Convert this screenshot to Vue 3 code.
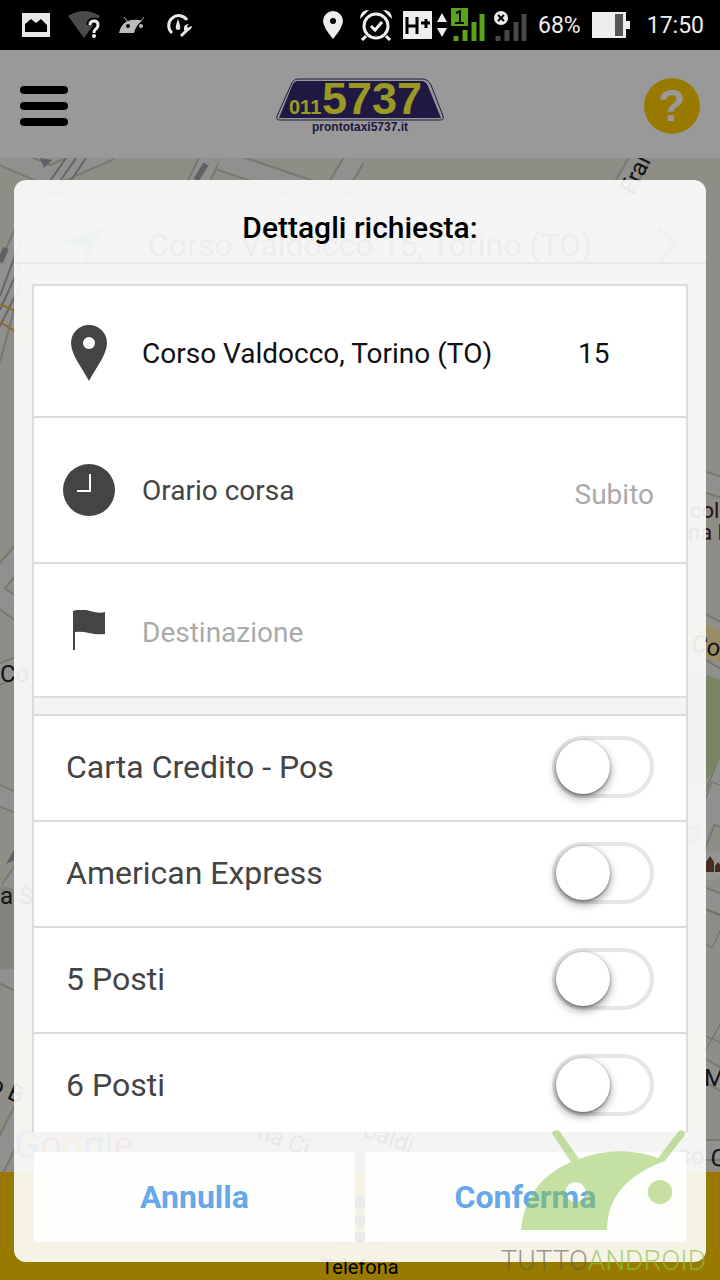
<template>
  <div class="screen">
    <!-- Status bar -->
    <div class="status-bar">
      <div class="status-group status-left">
        <svg class="status-icon" viewBox="0 0 28 28">
          <rect x="0" y="2" width="28" height="24" fill="#e8e8e8" />
          <path d="M3 21V13L9 8l5 4 5-4 6 6v7z" fill="#000" />
        </svg>
        <svg class="status-icon wide" viewBox="0 0 32 28">
          <path d="M0 5q16-10 32 0L16 27z" fill="#4a4a4a" />
          <path d="M22 14q0-4 4-4t4 4q0 2-2 4-2 1-2 4v5" fill="none" stroke="#000" stroke-width="7" />
          <path d="M22 14q0-4 4-4t4 4q0 2-2 4-2 1-2 4" fill="none" stroke="#eee" stroke-width="3" />
          <circle cx="26" cy="25" r="2" fill="#eee" />
        </svg>
        <svg class="status-icon" viewBox="0 0 28 28">
          <path d="M1 22Q3 11 13 9q8-1 11 1-6 4-8 12z" fill="#bbb" />
          <path d="M10 11L6 6M22 11l4-5" stroke="#bbb" stroke-width="1" />
          <circle cx="10" cy="15" r="2" fill="#000" />
          <circle cx="23" cy="15" r="2" fill="#bbb" />
        </svg>
        <svg class="status-icon" viewBox="0 0 28 28">
          <path d="M8 22A10 10 0 1 1 23 9" fill="none" stroke="#e8e8e8" stroke-width="3" />
          <path d="M14 8q3 8 2 10-2 2-4 0-1-2 2-10z" fill="#e8e8e8" />
          <path d="M17 25l6-6" stroke="#e8e8e8" stroke-width="3" />
          <path d="M25 13q-6 0-5 6 5 3 8-3l-1-1-3 2-1-2z" fill="#e8e8e8" />
        </svg>
      </div>
      <div class="status-group status-right">
        <svg class="status-icon" viewBox="0 0 28 28">
          <path d="M12 0a10 10 0 0 1 10 10q0 6-10 18Q2 16 2 10A10 10 0 0 1 12 0z" fill="#eee" />
          <circle cx="12" cy="10" r="3" fill="#000" />
        </svg>
        <svg class="status-icon alarm" viewBox="0 0 32 32">
          <circle cx="16" cy="17" r="12" fill="none" stroke="#eee" stroke-width="3" />
          <path d="M11 17l4 4 7-8M6 27l-4 4M26 27l4 4" fill="none" stroke="#eee" stroke-width="3" />
          <path d="M0 10q0-9 9-9zM32 10q0-9-9-9z" fill="#eee" />
        </svg>
        <svg class="status-mobile" viewBox="0 0 124 36">
          <rect x="0" y="4" width="29" height="28" fill="#eee" />
          <path d="M4 10v17M14 10v17M4 19h10M18 16h9M23 12v9" stroke="#000" stroke-width="3" />
          <path d="M34 15l5-9 5 9zM34 21h10l-5 9z" fill="#eee" />
          <rect x="48" y="1" width="17" height="18" fill="#5ba318" />
          <path d="M53 6l4-2v12M52 16h9" fill="none" stroke="#000" stroke-width="2" />
          <path d="M53 29v5M62 23v11M71 15v19M79 7v27" stroke="#5ba318" stroke-width="5" />
          <path d="M95 29v5M104 23v11M113 15v19M121 7v27" stroke="#484848" stroke-width="5" />
          <circle cx="98" cy="11" r="7" fill="#eee" />
          <path d="M95 8l6 6M101 8l-6 6" stroke="#000" stroke-width="2" />
        </svg>
        <span>68%</span>
        <svg class="status-battery" viewBox="0 0 44 26">
          <path d="M0 0h34v9h4v8h-4v9H0z" fill="#eee" />
          <rect x="23" y="2" width="8" height="22" fill="#555" />
        </svg>
        <span>17:50</span>
      </div>
    </div>

    <div class="page">
      <header class="top-bar">
        <button class="menu-button" type="button" aria-label="Menu">
          <span></span>
          <span></span>
          <span></span>
        </button>
        <svg class="logo" viewBox="0 0 168 56" role="img" aria-label="Pronto Taxi 5737">
          <path d="M22 1h124q6 0 9 6l12 31q1 4-3 4H4q-4 0-3-4L15 7q2-6 7-6z" fill="#fff" stroke="#32286e" />
          <path d="M22 3h123q5 0 7 5l13 32H3L16 8q2-5 6-5z" fill="#32286e" />
          <text class="logo-prefix" x="13" y="36">011</text>
          <text class="logo-number" x="46" y="36">5737</text>
          <text class="logo-site" x="84" y="53" text-anchor="middle">prontotaxi5737.it</text>
        </svg>
        <button class="help-button" type="button" aria-label="Aiuto">?</button>
      </header>

      <main class="map">
        <svg class="map-canvas" viewBox="0 158 720 1014" preserveAspectRatio="xMidYMid slice">
          <rect x="0" y="158" width="720" height="1014" fill="#edebe0" />
          <g fill="none" stroke="#c9c7be" stroke-width="22">
            <path v-for="road in roads" :key="road" :d="road" />
          </g>
          <g fill="none" stroke="#f0f0ee" stroke-width="18">
            <path v-for="road in roads" :key="road" :d="road" />
          </g>
          <path d="M44 190l22-32M50 196l26-38M58 200l28-42M0 310l34-76M0 296l26-70M0 326l40-80" stroke="#aaa" stroke-width="2" />
          <path d="M196 180l10-16M0 262l6-14" stroke="#a0a0b0" stroke-width="6" />
          <path d="M40 158l4 10 8-8z" fill="#a0a0b0" />
          <path d="M0 304l30 14M0 322l30 18" stroke="#e9b944" stroke-width="2" />
          <circle cx="0" cy="928" r="42" fill="#dddbd0" />
          <path d="M690 632l40 20" stroke="#ffe9a8" stroke-width="28" />
          <path d="M690 668l40 16v60l-26 40h-14z" fill="#c8e0a6" />
          <path d="M6 864l9-16v12z" fill="#a0a0b0" />
          <path d="M690 840l22-58 10 4M706 910l20 8-14 30-18-10M700 1060l26-46M690 1030l30 12" fill="none" stroke="#b5b3a8" />
          <circle cx="712" cy="866" r="14" fill="#fff" opacity=".7" />
          <path d="M706 872v-10l4-6 4 6v10zM715 872v-6l3-4 3 4v6z" fill="#73483a" />
          <rect x="686" y="827" width="12" height="14" fill="none" stroke="#4bb5dc" stroke-width="3" />
          <g class="map-labels">
            <text x="0" y="0" transform="translate(634 196) rotate(-64)">Frai</text>
            <text x="0" y="682">Co</text>
            <text x="0" y="904">a S</text>
            <text x="0" y="0" transform="translate(-12 1090) rotate(24)">o B</text>
            <text x="0" y="0" transform="translate(690 650) rotate(14)">Cor</text>
            <text x="704" y="1086">M</text>
            <text x="0" y="0" transform="translate(256 1138) rotate(20)">na Ci</text>
            <text x="0" y="0" transform="translate(362 1136) rotate(20)">baldi</text>
            <text x="0" y="0" transform="translate(678 1162) rotate(6)">so Co</text>
          </g>
          <g class="map-school">
            <text x="690" y="518">cola</text>
            <text x="688" y="540">na B</text>
          </g>
          <text class="google" x="14" y="1158">
            <tspan fill="#4285f4">G</tspan><tspan fill="#ea4335">o</tspan><tspan fill="#fbbc05">o</tspan><tspan fill="#4285f4">g</tspan><tspan fill="#34a853">l</tspan><tspan fill="#ea4335">e</tspan>
          </text>
        </svg>
        <div class="address-card">
          <svg class="address-arrow" viewBox="0 0 42 36">
            <path d="M42 0L26 36l-2-18L0 16z" fill="#7cc" />
          </svg>
          <span>Corso Valdocco 15, Torino (TO)</span>
          <svg class="address-chevron" viewBox="0 0 24 40">
            <path d="M2 2l18 18L2 38" fill="none" stroke="#bbb" stroke-width="5" />
          </svg>
        </div>
        <div class="request-card"></div>
      </main>

      <footer class="bottom-bar">
        <svg class="keypad" viewBox="0 0 44 48">
          <circle v-for="n in 9" :key="n" :cx="6 + ((n - 1) % 3) * 16" :cy="6 + Math.floor((n - 1) / 3) * 18" r="6" fill="#555" />
        </svg>
        <a class="phone-link" href="#">Telefona</a>
      </footer>
    </div>

    <div class="backdrop"></div>

    <section class="dialog" role="dialog" aria-labelledby="dialog-title">
      <h1 id="dialog-title" class="dialog-title">Dettagli richiesta:</h1>

      <form id="request-form" class="dialog-body" @submit.prevent>
        <div class="group">
          <div class="row row-address">
            <label class="row-icon" for="address" aria-label="Indirizzo">
              <svg class="icon-pin" viewBox="0 0 36 56">
                <path d="M18 0a18 18 0 0 1 18 18c0 12-12 26-18 38C12 44 0 30 0 18A18 18 0 0 1 18 0z" fill="#444" />
                <circle cx="18" cy="18" r="6" fill="#fff" />
              </svg>
            </label>
            <input id="address" v-model="address" class="field" type="text" />
            <input v-model="civic" class="field field-number" type="text" aria-label="Numero civico" />
          </div>
          <div class="row row-time">
            <label class="row-icon" for="time" aria-label="Orario">
              <svg class="icon-clock" viewBox="0 0 52 52">
                <circle cx="26" cy="26" r="26" fill="#444" />
                <path d="M27 10v17H14" fill="none" stroke="#fff" stroke-width="2" />
              </svg>
            </label>
            <label class="row-label" for="time">Orario corsa</label>
            <input id="time" v-model="time" class="field field-time" type="text" placeholder="Subito" />
          </div>
          <div class="row row-destination">
            <label class="row-icon" for="destination" aria-label="Destinazione">
              <svg class="icon-flag" viewBox="0 0 34 40">
                <path d="M1 1q8-3 17 0t15 1v22q-8 1-16-1T3 22v18H1z" fill="#444" />
              </svg>
            </label>
            <input id="destination" v-model="destination" class="field" type="text" placeholder="Destinazione" />
          </div>
        </div>

        <div class="group">
          <label v-for="option in options" :key="option.label" class="row row-option">
            <span>{{ option.label }}</span>
            <input v-model="option.checked" class="switch" type="checkbox" />
          </label>
        </div>
      </form>

      <div class="dialog-actions">
        <button type="button">Annulla</button>
        <button type="submit" form="request-form">Conferma</button>
      </div>
    </section>

    <!-- Watermark -->
    <div class="watermark">
      <svg class="watermark-robot" viewBox="0 0 164 102">
        <path d="M0 100Q4 52 50 32L32 5q-2-3 1-4 4-2 6 1l19 27q40-15 79-1L157 2q3-3 6-1 2 2 0 5l-19 25q-58 21-58 69zM54 52a10 10 0 1 0 1 20 10 10 0 0 0-1-20z" fill="#8bc34a" fill-rule="evenodd" />
        <circle cx="139" cy="62" r="12" fill="#8bc34a" />
      </svg>
      <div class="watermark-text"><span>TUTTO</span>ANDROID</div>
    </div>
  </div>
</template>

<script setup>
import { ref } from 'vue'

const address = ref('Corso Valdocco, Torino (TO)')
const civic = ref('15')
const time = ref('')
const destination = ref('')

const options = ref([
  { label: 'Carta Credito - Pos', checked: false },
  { label: 'American Express', checked: false },
  { label: '5 Posti', checked: false },
  { label: '6 Posti', checked: false }
])

const roads = [
  'M-10 150L50 176L-20 330',
  'M50 176L20 250L-10 360',
  'M50 176L110 150',
  'M210 158L180 220',
  'M220 160L380 214',
  'M355 158L330 200',
  'M616 200L640 158',
  'M-10 590L50 520M-10 590L60 640',
  'M-10 678L60 650',
  'M-10 792L60 820L10 890',
  'M-10 910L60 900M-10 968L60 1000',
  'M-10 1176L60 1040',
  'M680 474L730 490',
  'M680 612L730 638M680 656L730 686',
  'M740 730L690 860',
  'M680 800L730 820',
  'M680 888L730 908',
  'M680 1055L730 1085',
  'M60 1150L720 1150'
]
</script>

<style>
body {
  margin: 0;
}
</style>

<style scoped>
.screen {
  position: relative;
  display: flex;
  flex-direction: column;
  min-height: 100vh;
  overflow: hidden;
  font-family: Roboto, "Liberation Sans", sans-serif;
}

.screen *,
.screen *::before {
  box-sizing: border-box;
}

svg {
  display: block;
  flex-shrink: 0;
}

button,
input {
  margin: 0;
  padding: 0;
  border: 0;
  background: none;
  font-family: inherit;
}

/* Status bar */
.status-bar {
  display: flex;
  align-items: center;
  justify-content: space-between;
  height: 50px;
  padding: 0 16px 0 22px;
  background: #000;
  color: #eee;
  font-size: 23px;
}

.status-group {
  display: flex;
  align-items: center;
}

.status-left {
  gap: 18px;
}

.status-right {
  gap: 11px;
}

.status-icon {
  width: 28px;
  height: 28px;
}

.status-icon.wide {
  width: 32px;
}

.status-icon.alarm {
  width: 32px;
  height: 32px;
}

.status-mobile {
  width: 124px;
  height: 36px;
}

.status-battery {
  width: 44px;
  height: 26px;
}

/* Page under the dialog */
.page {
  display: flex;
  flex: 1;
  flex-direction: column;
}

.top-bar {
  display: flex;
  align-items: center;
  justify-content: space-between;
  height: 108px;
  padding: 4px 20px 0;
  background: #fff;
}

.menu-button {
  display: flex;
  flex-direction: column;
  gap: 8px;
  width: 56px;
}

.menu-button span {
  width: 48px;
  height: 8px;
  border-radius: 4px;
  background: #000;
}

.logo {
  width: 168px;
  height: 56px;
}

.logo text {
  font-family: "Liberation Sans", sans-serif;
  font-weight: 700;
}

.logo-prefix {
  fill: #ffff3c;
  font-size: 20px;
}

.logo-number {
  fill: #ffff3c;
  font-size: 45px;
}

.logo .logo-site {
  fill: #32286e;
  font-size: 12px;
}

.help-button {
  width: 56px;
  height: 56px;
  border-radius: 50%;
  background: #ffcc00;
  color: #fff;
  font-family: "Liberation Sans", sans-serif;
  font-size: 44px;
  font-weight: 700;
  line-height: 56px;
}

.map {
  position: relative;
  display: flex;
  flex: 1;
  flex-direction: column;
  justify-content: space-between;
  padding: 38px 22px 42px;
}

.map-canvas {
  position: absolute;
  inset: 0;
  width: 100%;
  height: 100%;
}

.map-labels {
  fill: #222;
  font-size: 24px;
}

.map-school {
  fill: #4b1a1a;
  font-size: 22px;
}

.google {
  font-size: 38px;
}

.address-card {
  position: relative;
  display: flex;
  align-items: center;
  gap: 46px;
  height: 98px;
  padding: 0 18px 0 38px;
  border-radius: 6px;
  background: #fff;
  color: #777;
  font-size: 32px;
}

.address-arrow {
  width: 42px;
  height: 36px;
}

.address-chevron {
  width: 24px;
  height: 40px;
  margin-left: auto;
}

.request-card {
  position: relative;
  height: 96px;
  border-radius: 6px;
  background: #ffec8c;
}

.bottom-bar {
  display: flex;
  flex-direction: column;
  align-items: center;
  justify-content: flex-end;
  gap: 10px;
  height: 108px;
  background: #ffcc00;
}

.keypad {
  width: 44px;
  height: 48px;
}

.phone-link {
  color: #000;
  font-size: 20px;
  line-height: 26px;
  text-decoration: none;
}

.backdrop {
  position: absolute;
  inset: 50px 0 0;
  background: rgba(0, 0, 0, 0.4);
}

/* Dialog */
.dialog {
  position: absolute;
  inset: 180px 14px 18px;
  display: flex;
  flex-direction: column;
  border-radius: 12px;
  background: rgba(255, 255, 255, 0.9);
}

.dialog-title {
  height: 84px;
  margin: 0;
  padding-top: 28px;
  border-bottom: 2px solid #e8e8e8;
  color: #000;
  font-size: 30px;
  font-weight: 500;
  line-height: 40px;
  text-align: center;
}

.dialog-body {
  flex: 1;
  min-height: 0;
  margin: 20px 18px 0;
  border: 2px solid #dcdcdc;
  border-bottom: 0;
  overflow-x: hidden;
  overflow-y: auto;
  scrollbar-width: none;
}

.group {
  background: #fff;
}

.group + .group {
  margin-top: 16px;
  border-top: 2px solid #dcdcdc;
}

.row {
  display: flex;
  align-items: center;
  padding: 0 32px 0 28px;
  color: #444;
  font-size: 28px;
}

.row + .row {
  border-top: 2px solid #dcdcdc;
}

.row-address {
  height: 130px;
  padding-top: 4px;
}

.row-time {
  height: 146px;
}

.row-destination {
  height: 136px;
  border-bottom: 2px solid #dcdcdc;
}

.row-icon {
  display: flex;
  flex-shrink: 0;
  justify-content: center;
  width: 54px;
  margin-right: 26px;
}

.row-label {
  flex: 1;
}

.icon-pin {
  width: 36px;
  height: 56px;
}

.icon-clock {
  width: 52px;
  height: 52px;
}

.icon-flag {
  width: 34px;
  height: 40px;
}

.field {
  flex: 1;
  min-width: 0;
  height: 60px;
  color: #111;
  font-size: 28px;
}

.field::placeholder {
  color: #aaa;
  opacity: 1;
}

.field-number {
  flex: none;
  width: 76px;
}

.field-time {
  flex: none;
  width: 160px;
  padding-top: 8px;
  text-align: right;
}

.row-destination .field {
  padding-top: 4px;
}

.row-option {
  justify-content: space-between;
  height: 104px;
  padding-bottom: 2px;
  padding-left: 32px;
  font-size: 32px;
}

.row-option + .row-option {
  height: 106px;
}

.switch {
  width: 102px;
  height: 62px;
  padding: 0;
  border: 4px solid #e6e6e6;
  border-radius: 31px;
  background: #fff;
  appearance: none;
}

.switch::before {
  content: '';
  display: block;
  width: 54px;
  height: 54px;
  border-radius: 50%;
  background: #fff;
  box-shadow: 0 4px 10px rgba(0, 0, 0, 0.4), 0 1px 3px rgba(0, 0, 0, 0.4);
  transition: transform 0.2s ease;
}

.switch:checked {
  border-color: #6aaaea;
  background: #6aaaea;
}

.switch:checked::before {
  transform: translateX(40px);
}

.dialog-actions {
  display: flex;
  gap: 10px;
  padding: 20px;
}

.dialog-actions button {
  flex: 1;
  height: 90px;
  border-radius: 2px;
  background: rgba(255, 255, 255, 0.9);
  color: #66a8ea;
  font-size: 32px;
  font-weight: 700;
}

/* Watermark */
.watermark {
  position: absolute;
  right: 14px;
  bottom: 2px;
  display: flex;
  flex-direction: column;
  align-items: flex-end;
  pointer-events: none;
}

.watermark-robot {
  width: 164px;
  height: 102px;
  margin: 0 21px 12px 0;
  opacity: 0.5;
}

.watermark-text {
  color: rgba(139, 195, 74, 0.7);
  font-size: 28px;
  font-weight: 300;
  line-height: 34px;
}

.watermark-text span {
  color: rgba(90, 90, 80, 0.6);
}
</style>
